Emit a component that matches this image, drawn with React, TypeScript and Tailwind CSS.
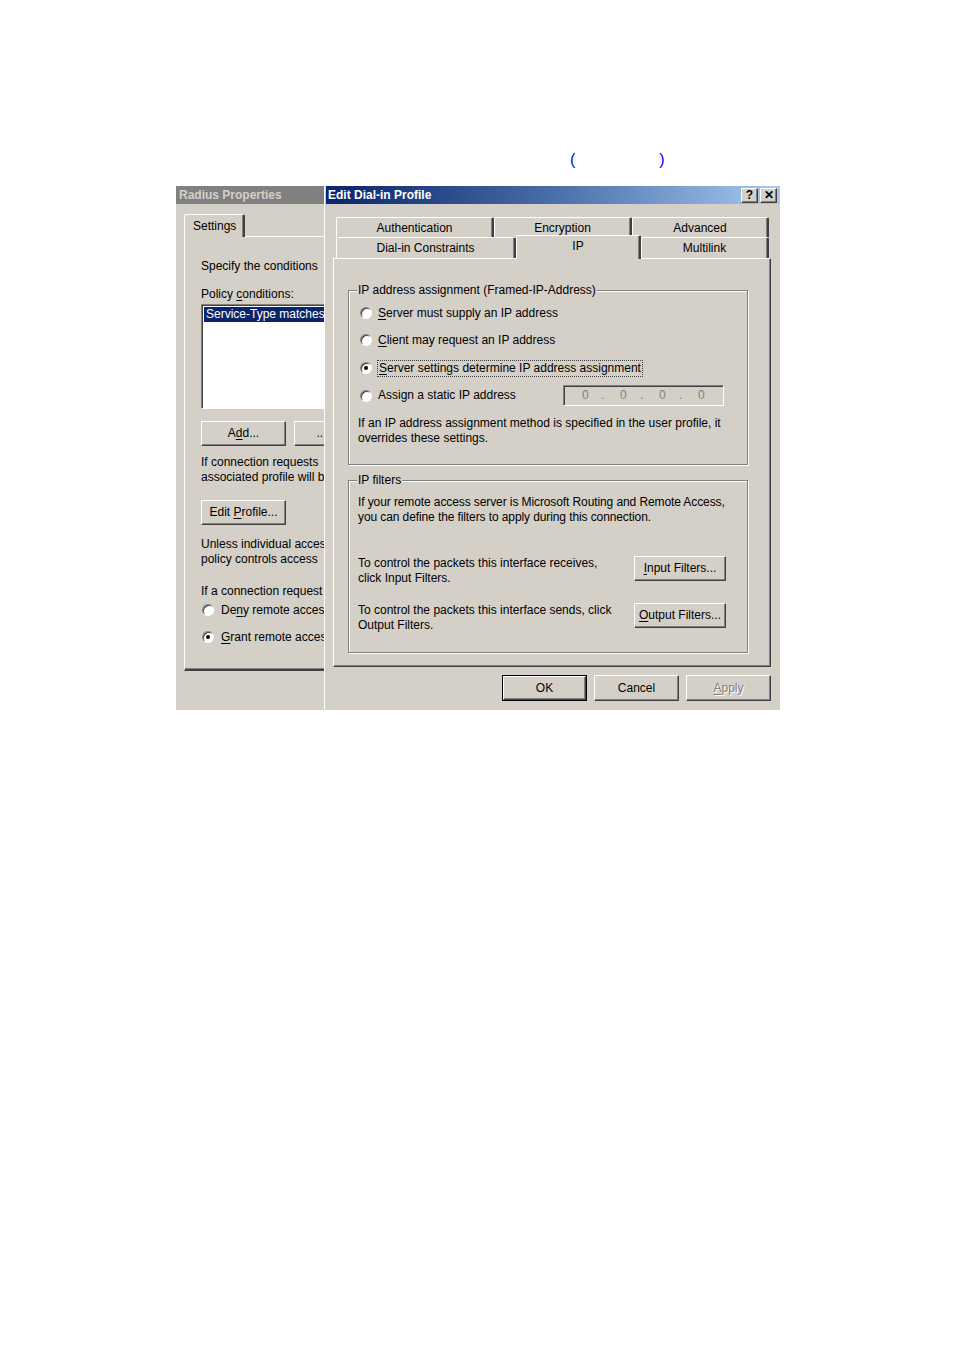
import React from 'react';

const bevel =
  "bg-[#d4d0c8] border border-t-white border-l-white border-r-[#404040] border-b-[#404040] shadow-[inset_-1px_-1px_0_#808080]";

function U({ children }: { children: React.ReactNode }) {
  return <span className="underline underline-offset-[2px]">{children}</span>;
}

function Btn({ className, children, disabled }: { className: string; children: React.ReactNode; disabled?: boolean }) {
  return (
    <div className={`${bevel} ${className} flex items-center justify-center ${disabled ? "text-[#808080] [text-shadow:1px_1px_0_#fff]" : "text-black"}`}>
      <span className="whitespace-pre">{children}</span>
    </div>
  );
}

function Radio({ checked }: { checked?: boolean }) {
  return (
    <span className="relative inline-flex items-center justify-center w-[12px] h-[12px] rounded-full bg-white border border-t-[#808080] border-l-[#808080] border-r-white border-b-white shadow-[inset_1px_1px_0_#404040] shrink-0">
      {checked && <span className="w-[4px] h-[4px] rounded-full bg-black" />}
    </span>
  );
}

function Group({ label, className, children }: { label: string; className: string; children: React.ReactNode }) {
  return (
    <div className={`relative border border-[#808080] shadow-[1px_1px_0_#fff,inset_1px_1px_0_#fff] ${className}`}>
      <span className="absolute top-[-8px] left-[8px] bg-[#d4d0c8] px-[1px] leading-[15px]">{label}</span>
      {children}
    </div>
  );
}

function Tab({ className, children }: { className: string; children: React.ReactNode }) {
  return (
    <div className={`flex items-center justify-center bg-[#d4d0c8] border-t border-l border-t-white border-l-white border-r-2 border-r-[#404040] rounded-tl-[2px] rounded-tr-[2px] shadow-[inset_-1px_0_0_#808080] ${className}`}>
      {children}
    </div>
  );
}

export default function App() {
  return (
    <div className="w-[954px] h-[1350px] bg-white font-['Liberation_Sans',Arial,sans-serif] text-[12px] text-black leading-[15px]">
      <div className="flex ml-[570px] pt-[150px] h-[170px] text-[#0000ff] text-[16px] leading-[20px]">
        <span>(</span>
        <span className="w-[84px]" />
        <span>)</span>
      </div>
      <div className="ml-[176px] mt-[16px] w-[604px] h-[524px] flex bg-[#d4d0c8]">
        {/* Left: Radius Properties */}
        <div className="w-[148px] h-full flex flex-col overflow-hidden">
          <div className="h-[18px] bg-[#808080] text-[#d4d0c8] font-bold flex items-center pl-[3px] text-[12px] whitespace-nowrap">
            Radius Properties
          </div>
          <div className="pl-[8px] mt-[10px] flex">
            <Tab className="w-[61px] h-[23px] justify-start pl-[8px] -mb-[1px] relative z-10">Settings</Tab>
            <div className="flex-1" />
          </div>
          <div className="ml-[8px] h-[435px] border-t border-l border-white border-b-2 border-b-[#404040] shadow-[inset_0_-1px_0_#808080] pl-[16px] whitespace-nowrap">
            <div className="mt-[22px]">Specify the conditions</div>
            <div className="mt-[13px]">Policy <U>c</U>onditions:</div>
            <div className="mt-[2px] w-[140px] h-[105px] bg-white border border-t-[#808080] border-l-[#808080] border-b-white border-r-white shadow-[inset_1px_1px_0_#404040] pt-[2px] pl-[2px]">
              <div className="bg-[#0a246a] text-white h-[15px] leading-[15px] pl-[2px]">Service-Type matches</div>
            </div>
            <div className="mt-[12px] flex gap-[8px]">
              <Btn className="w-[85px] h-[25px] shrink-0">A<U>d</U>d...</Btn>
              <Btn className="w-[85px] h-[25px] shrink-0">
                <span className="pr-[30px]">...</span>
              </Btn>
            </div>
            <div className="mt-[9px]">If connection requests</div>
            <div>associated profile will be</div>
            <Btn className="mt-[15px] w-[85px] h-[25px]">Edit <U>P</U>rofile...</Btn>
            <div className="mt-[12px]">Unless individual access</div>
            <div>policy controls access</div>
            <div className="mt-[17px]">If a connection request</div>
            <div className="mt-[3px] flex items-center gap-[7px] h-[16px] pl-[1px]">
              <Radio />
              <span>De<U>n</U>y remote access</span>
            </div>
            <div className="mt-[11px] flex items-center gap-[7px] h-[16px] pl-[1px]">
              <Radio checked />
              <span><U>G</U>rant remote access</span>
            </div>
          </div>
        </div>
        <div className="w-[1px] h-full bg-white" />
        {/* Right: Edit Dial-in Profile */}
        <div className="w-[455px] h-full flex flex-col pl-[1px]">
          <div className="h-[18px] bg-gradient-to-r from-[#0a246a] via-[#4a6ea8] to-[#a6caf0] flex items-center justify-between pl-[2px] pr-[3px]">
            <span className="text-white font-bold text-[12px]">Edit Dial-in Profile</span>
            <div className="flex gap-[2px]">
              <div className={`${bevel} w-[17px] h-[15px] flex items-center justify-center font-bold text-[12px] leading-none`}>?</div>
              <div className={`${bevel} w-[17px] h-[15px] flex items-center justify-center font-bold text-[12px] leading-none`}>✕</div>
            </div>
          </div>
          <div className="ml-[7px] w-[438px] mt-[13px]">
            <div className="flex h-[20px] pl-[3px]">
              <Tab className="w-[158px] h-[20px] pt-[1px]">Authentication</Tab>
              <Tab className="w-[138px] h-[20px] pt-[1px]">Encryption</Tab>
              <Tab className="w-[137px] h-[20px] pt-[1px]">Advanced</Tab>
            </div>
            <div className="flex h-[21px] items-end pl-[3px]">
              <Tab className="w-[180px] h-[21px]">Dial-in Constraints</Tab>
              <Tab className="w-[125px] h-[24px] -mb-[1px] relative z-10 items-start pt-[3px]">IP</Tab>
              <Tab className="w-[128px] h-[21px]">Multilink</Tab>
            </div>
            <div className="h-[409px] border-t border-l border-white border-r border-b border-r-[#404040] border-b-[#404040] shadow-[inset_-1px_-1px_0_#808080] pl-[14px] pt-[31px]">
              <Group label="IP address assignment (Framed-IP-Address)" className="w-[400px] h-[175px] pl-[9px] pt-[14px]">
                <div className="flex items-center gap-[6px] h-[16px] pl-[2px]">
                  <Radio />
                  <span><U>S</U>erver must supply an IP address</span>
                </div>
                <div className="flex items-center gap-[6px] h-[16px] mt-[11px] pl-[2px]">
                  <Radio />
                  <span><U>C</U>lient may request an IP address</span>
                </div>
                <div className="flex items-center gap-[6px] h-[16px] mt-[12px] pl-[2px]">
                  <Radio checked />
                  <span className="outline outline-1 outline-dotted outline-[#404040] outline-offset-[0px] px-[1px] leading-[15px]"><U>S</U>erver settings determine IP address assignment</span>
                </div>
                <div className="flex items-center h-[21px] mt-[9px] pl-[2px]">
                  <Radio />
                  <span className="ml-[6px] w-[185px]">Assign a static IP address</span>
                  <div className="w-[161px] h-[21px] border border-t-[#808080] border-l-[#808080] border-r-white border-b-white shadow-[inset_1px_1px_0_#404040] flex items-center text-[#808080] pl-[18px]">
                    <span className="w-[19px]">0</span><span className="w-[19px]">.</span>
                    <span className="w-[20px]">0</span><span className="w-[19px]">.</span>
                    <span className="w-[20px]">0</span><span className="w-[19px]">.</span>
                    <span>0</span>
                  </div>
                </div>
                <div className="mt-[10px] pr-[20px]">
                  If an IP address assignment method is specified in the user profile, it overrides these settings.
                </div>
              </Group>
              <Group label="IP filters" className="mt-[15px] w-[400px] h-[173px] pl-[9px] pt-[14px] pr-[2px]">
                <div className="tracking-[-0.1px]">If your remote access server is Microsoft Routing and Remote Access, you can define the filters to apply during this connection.</div>
                <div className="mt-[31px] pr-[19px] flex justify-between items-start">
                  <div className="w-[260px]">To control the packets this interface receives, click Input Filters.</div>
                  <Btn className="w-[92px] h-[25px]"><U>I</U>nput Filters...</Btn>
                </div>
                <div className="mt-[17px] pr-[19px] flex justify-between items-start">
                  <div className="w-[270px]">To control the packets this interface sends, click Output Filters.</div>
                  <Btn className="w-[92px] h-[25px]"><U>O</U>utput Filters...</Btn>
                </div>
              </Group>
            </div>
            <div className="mt-[8px] flex justify-end gap-[7px]">
              <div className="w-[85px] h-[26px] border border-black">
                <Btn className="w-full h-full">OK</Btn>
              </div>
              <Btn className="w-[85px] h-[26px]">Cancel</Btn>
              <Btn className="w-[85px] h-[26px]" disabled><U>A</U>pply</Btn>
            </div>
          </div>
        </div>
      </div>
    </div>
  );
}
